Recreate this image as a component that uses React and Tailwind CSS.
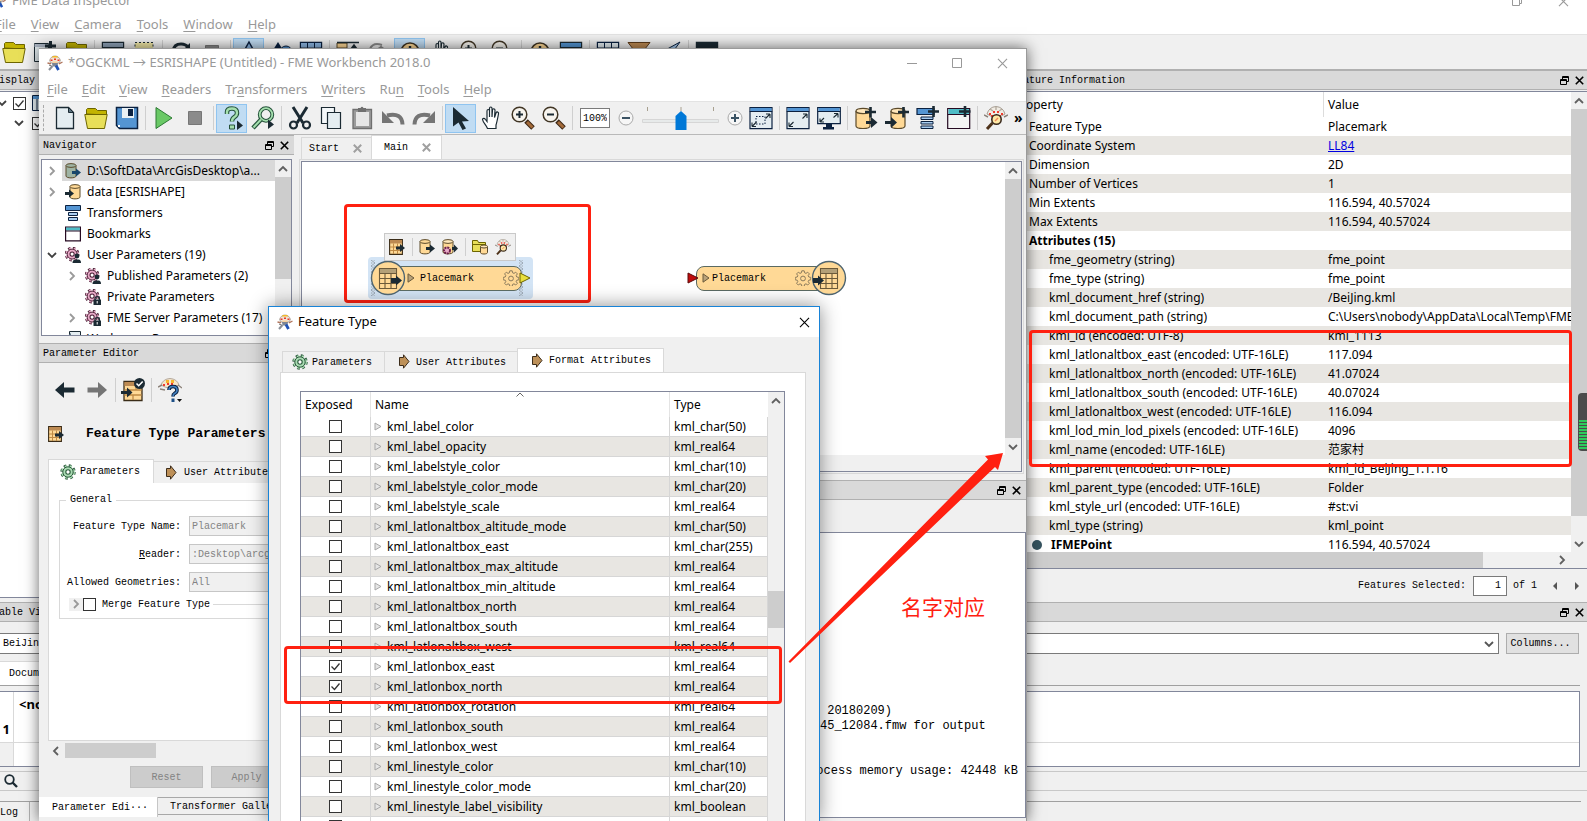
import React from 'react';

const UI = "[font-family:'Noto_Sans','Noto_Sans_CJK_SC',sans-serif]";
const MONO = "[font-family:'Liberation_Mono','Noto_Sans_CJK_SC',monospace]";

const exposedRows = [
  { name: 'kml_label_color', type: 'kml_char(50)' },
  { name: 'kml_label_opacity', type: 'kml_real64' },
  { name: 'kml_labelstyle_color', type: 'kml_char(10)' },
  { name: 'kml_labelstyle_color_mode', type: 'kml_char(20)' },
  { name: 'kml_labelstyle_scale', type: 'kml_real64' },
  { name: 'kml_latlonaltbox_altitude_mode', type: 'kml_char(50)' },
  { name: 'kml_latlonaltbox_east', type: 'kml_char(255)' },
  { name: 'kml_latlonaltbox_max_altitude', type: 'kml_real64' },
  { name: 'kml_latlonaltbox_min_altitude', type: 'kml_real64' },
  { name: 'kml_latlonaltbox_north', type: 'kml_real64' },
  { name: 'kml_latlonaltbox_south', type: 'kml_real64' },
  { name: 'kml_latlonaltbox_west', type: 'kml_real64' },
  { name: 'kml_latlonbox_east', type: 'kml_real64', checked: true },
  { name: 'kml_latlonbox_north', type: 'kml_real64', checked: true },
  { name: 'kml_latlonbox_rotation', type: 'kml_real64' },
  { name: 'kml_latlonbox_south', type: 'kml_real64' },
  { name: 'kml_latlonbox_west', type: 'kml_real64' },
  { name: 'kml_linestyle_color', type: 'kml_char(10)' },
  { name: 'kml_linestyle_color_mode', type: 'kml_char(20)' },
  { name: 'kml_linestyle_label_visibility', type: 'kml_boolean' },
  { name: 'kml_linestyle_outer_color', type: 'kml_char(10)' },
];

const featureRows = [
  { name: 'Feature Type', value: 'Placemark' },
  { name: 'Coordinate System', value: 'LL84', link: true },
  { name: 'Dimension', value: '2D' },
  { name: 'Number of Vertices', value: '1' },
  { name: 'Min Extents', value: '116.594, 40.57024' },
  { name: 'Max Extents', value: '116.594, 40.57024' },
  { name: 'Attributes (15)', value: '', bold: true },
  { name: 'fme_geometry (string)', value: 'fme_point', child: true },
  { name: 'fme_type (string)', value: 'fme_point', child: true },
  { name: 'kml_document_href (string)', value: '/BeiJing.kml', child: true },
  { name: 'kml_document_path (string)', value: 'C:\\Users\\nobody\\AppData\\Local\\Temp\\FME_1', child: true },
  { name: 'kml_id (encoded: UTF-8)', value: 'kml_1113', child: true },
  { name: 'kml_latlonaltbox_east (encoded: UTF-16LE)', value: '117.094', child: true },
  { name: 'kml_latlonaltbox_north (encoded: UTF-16LE)', value: '41.07024', child: true },
  { name: 'kml_latlonaltbox_south (encoded: UTF-16LE)', value: '40.07024', child: true },
  { name: 'kml_latlonaltbox_west (encoded: UTF-16LE)', value: '116.094', child: true },
  { name: 'kml_lod_min_lod_pixels (encoded: UTF-16LE)', value: '4096', child: true },
  { name: 'kml_name (encoded: UTF-16LE)', value: '范家村', child: true },
  { name: 'kml_parent (encoded: UTF-16LE)', value: 'kml_id_BeiJing_1.1.16', child: true },
  { name: 'kml_parent_type (encoded: UTF-16LE)', value: 'Folder', child: true },
  { name: 'kml_style_url (encoded: UTF-16LE)', value: '#st:vi', child: true },
  { name: 'kml_type (string)', value: 'kml_point', child: true },
  { name: 'IFMEPoint', value: '116.594, 40.57024', bold: true, point: true },
];

/* ---------- icons ---------- */

const Svg = ({ size = 24, box = 24, children }) => (
  <svg width={size} height={size} viewBox={`0 0 ${box} ${box}`} fill="none" className="block shrink-0">
    {children}
  </svg>
);

const INK = '#1b2a33';

const Mascot = ({ size = 16 }) => (
  <Svg size={size} box={16}>
    <path d="M2.500 5.500Q4 1 8 1t5.500 4.500L12 8H4z" fill="#efe3d6" stroke="#a39a90" strokeWidth=".8" />
    <path d="M4.500 2.500h7L10 1H6z" fill="#f2b92c" />
    <path d="M3.500 4.500h2v1.500h-2zM7 3.500h2V5H7zM10.500 4.500h2v1.500h-2z" fill="#e8382a" />
    <path d="M5.500 6.500h5V8h-5z" fill="#f8cf9a" />
    <path d="M.5 8l3.500.8M12 8.800l3.500-1.800" stroke="#b0765e" strokeWidth="1.400" />
    <path d="M5 8h6l-.5 3.500h-5z" fill="#7c8594" />
    <path d="M5.500 11l-3.500 4" stroke="#8a8f98" strokeWidth="2" />
    <path d="M9 10.500l2.500 4.500" stroke="#1f51b5" strokeWidth="2.800" />
    <path d="M2 10l2.500 1" stroke="#6b6b6b" />
  </Svg>
);

const NewIcon = () => (
  <Svg>
    <path d="M3.500 1.500h12l5 5v16h-17z" fill="#e4edf1" stroke={INK} strokeWidth="1.300" />
    <path d="M15.500 1.500v5h5z" fill="#5c7380" stroke={INK} />
  </Svg>
);
const FolderIcon = () => (
  <Svg>
    <path d="M2.500 8V3.500l1-1h8l2 2h9V9z" fill="#c3b400" stroke="#6d6500" />
    <path d="M.8 8.500h22.400l-2.700 14H3.500z" fill="#e8df58" stroke="#6d6500" />
  </Svg>
);
const SaveIcon = () => (
  <Svg>
    <path d="M1.500 1.500h21v21h-18l-3-3z" fill="#5495d3" stroke="#0b2140" strokeWidth="1.500" />
    <path d="M7 2h12v10H7z" fill="#e9f0f4" />
    <path d="M13 3h5v7h-5z" fill="#0b2140" />
    <path d="M3 19h2v2H3z" fill="#fff" />
  </Svg>
);
const PlayIcon = () => (
  <Svg>
    <path d="M4 1.500 20 12 4 22.500z" fill="#6ac966" stroke="#2c7a34" />
  </Svg>
);
const StopIcon = () => (
  <Svg>
    <path d="M5.500 5.500h13v13h-13z" fill="#8b8b8b" stroke="#777" />
  </Svg>
);
const HelpIcon = () => (
  <Svg>
    <path d="M7 8V6q0-3.500 5-3.500T17 7q0 2.500-2.500 4T12 15.500" stroke="#24523a" strokeWidth="4.500" />
    <path d="M7 8V6q0-3.500 5-3.500T17 7q0 2.500-2.500 4T12 15.500" stroke="#a5dfae" strokeWidth="2.400" />
    <path d="M9.500 19h5v4h-5z" fill="#a5dfae" stroke="#24523a" />
    <path d="M17 14.500l6 5-6 4.500z" fill={INK} />
  </Svg>
);
const FindRunIcon = () => (
  <Svg>
    <circle cx="15" cy="8.500" r="6.300" stroke="#24523a" strokeWidth="3.800" />
    <circle cx="15" cy="8.500" r="6.300" stroke="#a5dfae" strokeWidth="1.800" />
    <path d="M10 13.500 2 22" stroke="#24523a" strokeWidth="4.500" />
    <path d="M10 13.500 2.500 21.500" stroke="#a5dfae" strokeWidth="2" />
    <path d="M17 13.500l6 5-6 4.500z" fill={INK} />
  </Svg>
);
const CutIcon = () => (
  <Svg>
    <path d="M5 1l10 16M19 1 9 17" stroke={INK} strokeWidth="3" />
    <circle cx="5.500" cy="19" r="3.500" stroke={INK} strokeWidth="2.200" />
    <circle cx="18.500" cy="19" r="3.500" stroke={INK} strokeWidth="2.200" />
  </Svg>
);
const CopyIcon = () => (
  <Svg>
    <path d="M2.500 1.500h13v16h-13z" fill="#f4f8fa" stroke={INK} strokeWidth="1.200" />
    <path d="M8.500 6.500h13v16h-13z" fill="#e4edf1" stroke={INK} strokeWidth="1.200" />
  </Svg>
);
const PasteIcon = () => (
  <Svg>
    <path d="M3 3.500h18.500v19H3z" fill="#9b9b9b" stroke="#6f6f6f" strokeWidth="1.300" />
    <path d="M6 6h13v14H6z" fill="#e6e6e6" />
    <path d="M8 2h2.500q1.500-2.500 3 0H16v4H8z" fill="#6f6f6f" />
  </Svg>
);
const UndoIcon = () => (
  <Svg>
    <path d="M6 9.500Q21 6 21.500 18.500" stroke="#757575" strokeWidth="4" />
    <path d="M1 5v12h12z" fill="#757575" />
  </Svg>
);
const RedoIcon = () => (
  <Svg>
    <path d="M18 9.500Q3 6 2.500 18.500" stroke="#757575" strokeWidth="4" />
    <path d="M23 5v12H11z" fill="#757575" />
  </Svg>
);
const PointerIcon = () => (
  <Svg>
    <path d="M4 1l16 14-7 .5 4 7-3.500 1.500-4-7.500L4 20.500z" fill={INK} />
  </Svg>
);
const HandIcon = () => (
  <Svg>
    <path
      d="M7.500 22.500c-1-3-4.500-6-5-9 0-1.500 2-1.500 3 0l1.500 2V5c0-2 2.500-2 2.500 0v6-8.500c0-2 2.500-2 2.500 0V11l.5-7c.3-1.800 2.700-1.600 2.500.5l-.5 7 1.500-4.500c.8-1.800 3-1 2.500 1-.8 4-1.500 8-2.500 11v3.500z"
      fill="#fff"
      stroke={INK}
      strokeWidth="1.200"
    />
  </Svg>
);
const ZoomIcon = ({ plus }) => (
  <Svg>
    <path d="M15 15l7 7" stroke="#3a2412" strokeWidth="5" />
    <path d="M16 16l5.500 5.500" stroke="#a36a3a" strokeWidth="3" />
    <circle cx="8.500" cy="8.500" r="7.300" fill="#f7f4ee" stroke="#403524" strokeWidth="1.500" />
    <path d={plus ? 'M8.500 5v7M5 8.500h7' : 'M5 8.500h7'} stroke={INK} strokeWidth="2" />
  </Svg>
);
const WindowArrows = ({ monitor, dashed }) => (
  <Svg>
    <path d={monitor ? 'M.7 1.700h22.600v16H.7z' : 'M1 1.700h22v21H1z'} fill="#e4edf1" stroke="#0b2140" strokeWidth="1.200" />
    <path d="M1.500 2h21v3h-21z" fill="#5495d3" />
    <path d="M.7 5.500h22.600" stroke="#0b2140" />
    {dashed && <path d="M7 10.500h9v7.500H7z" stroke="#0b2140" strokeDasharray="1.500 1.500" />}
    <path
      d={monitor
        ? 'M21 7.500h-4M21 7.500v4M21 7.500l-4.500 4M3 16v-3.500M3 16h4M3 16l4-4'
        : 'M21 8h-4M21 8v4M21 8l-4.500 4.500M3 20.500v-4M3 20.500h4M3 20.500 7.500 16'}
      stroke={INK}
      strokeWidth="1.100"
    />
    {monitor && <path d="M9 18h6v3h2v2.500H6V21h3z" fill="#0b2140" />}
  </Svg>
);
const Drum = () => (
  <>
    <path d="M2 5v15c0 3.300 14 3.300 14 0V5" fill="#ffd996" stroke="#5b4a2a" strokeWidth="1.200" />
    <ellipse cx="9" cy="5" rx="7" ry="2.600" fill="#ffe7bb" stroke="#5b4a2a" strokeWidth="1.200" />
  </>
);
const ReaderAdd = () => (
  <Svg>
    <Drum />
    <path d="M12 15h5v-4l6.500 5.500L17 22v-4h-5z" fill={INK} />
    <path d="M11 6h11M16.500 1v10.500" stroke={INK} strokeWidth="2.600" />
  </Svg>
);
const WriterAdd = () => (
  <Svg>
    <g transform="translate(4 0)">
      <Drum />
    </g>
    <path d="M0 15h6v-4l6 5.500L6 22v-4H0z" fill={INK} />
    <path d="M13 6h11M18.500 1v10.500" stroke={INK} strokeWidth="2.600" />
  </Svg>
);
const TransformerAdd = () => (
  <Svg>
    <path d="M1 2.500h17v6H1z" fill="#5495d3" stroke="#0b2140" strokeWidth="1.200" />
    <path d="M5 11h12v2.500H5zM5 15.500h12V18H5zM5 20h12v2.500H5z" fill="#a9cdf0" stroke="#0b2140" />
    <path d="M12 5.500h11M17.500 0v11" stroke={INK} strokeWidth="2.600" />
  </Svg>
);
const BookmarkAdd = () => (
  <Svg>
    <path d="M.7 2.500h22v20h-22z" fill="#f4f4f4" stroke="#260a22" strokeWidth="1.200" />
    <path d="M1.500 3h20.500v5H1.500z" fill="#4fbcc6" />
    <path d="M.7 8.500h22" stroke="#260a22" />
    <path d="M12 5.500h11.500M18 0v11" stroke={INK} strokeWidth="2.600" />
  </Svg>
);
const InspectorIcon = ({ size = 24 }) => (
  <Svg size={size}>
    <path d="M3 8q2-7 9-7.500Q19 1 21 8l-9 5z" fill="#f1ece4" stroke="#a69d92" />
    <path d="M6 3l3 2M18 3l-3 2M12 1v3" stroke="#b5aca0" strokeWidth="1.400" />
    <path d="M5 7h2v2H5zM9 5h2v2H9zM13 5h2v2h-2zM17 7h2v2h-2zM7 9h2v2H7zM15 9h2v2h-2z" fill="#f03c2e" />
    <path d="M0 9l4 2M24 9l-4 2" stroke="#8b8178" strokeWidth="1.400" />
    <path d="M8.500 17 3 23" stroke="#4d3118" strokeWidth="3" />
    <circle cx="12.500" cy="13.500" r="4.700" fill="#ffe9a6" stroke="#3a2a1c" strokeWidth="1.600" />
    <path d="M11 15l3-3" stroke="#f08a5a" strokeWidth="1.400" />
  </Svg>
);
const MascotHelp = () => (
  <Svg>
    <path d="M3 7q2-6 9-6.500Q19 1 21 7q-9 6-18 0z" fill="#f6e5c8" stroke="#b3a79a" />
    <path d="M8 2h3v3H8zM13 2h3v3h-3z" fill="#f6b52c" />
    <path d="M5 6h2v2H5zM9 5h2v2H9zM13 5h2v2h-2zM16 7h2v2h-2z" fill="#ee3b2f" />
    <path d="M0 9l4-2M20 7l4 3M2 11l5 1" stroke="#8b8178" strokeWidth="1.400" />
    <path d="M11 12q0-3.500 4-3.500t4 3.500q0 2.500-2.500 3.500-1.500.8-1.500 3" stroke="#0b2140" strokeWidth="3.600" />
    <path d="M11 12q0-3.500 4-3.500t4 3.500q0 2.500-2.500 3.500-1.500.8-1.500 3" stroke="#3f7fc0" strokeWidth="1.600" />
    <path d="M13.500 20.500h3V24h-3z" fill="#1d4f86" />
    <path d="M19 21h5l-2.500 3z" fill="#111" />
  </Svg>
);

const FeatureTable = () => (
  <Svg size={16} box={16}>
    <path d="M.6.600h12.800v14.800H.6z" fill="#ffd996" stroke="#3a2c18" strokeWidth="1.100" />
    <path d="M1 1h12v3.500H1z" fill="#bd8a52" />
    <path d="M1 8h12M1 11.500h12M4.500 4.500V15M8.500 4.500V15" stroke="#c08b45" />
    <path d="M7 7.500h4V5l5 4-5 4v-2.500H7z" fill={INK} />
  </Svg>
);
const FeatureTableCheck = () => (
  <Svg>
    <path d="M3 3.500h18v19H3z" fill="#ffd996" stroke="#3a2c18" strokeWidth="1.300" />
    <path d="M3.500 4h17v4h-17z" fill="#bd8a52" />
    <path d="M3.500 12h17M3.500 17h17M9 12v5M15 8v4M12 17v5" stroke="#c08b45" strokeWidth="1.300" />
    <path d="M0 13h6v-3.500l5.500 5-5.500 5V16H0z" fill={INK} />
    <circle cx="18.500" cy="5.500" r="5.500" fill={INK} />
    <path d="M15.500 5.500l2.200 2.200 4-4.200" stroke="#fff" strokeWidth="1.600" />
  </Svg>
);
const DrumArrow = ({ color = '#ffd996', ink = INK, left }) => (
  <Svg size={16} box={16}>
    <g transform={left ? 'translate(4 0)' : undefined}>
      <path d="M1 2.500v10.500c0 2.500 10 2.500 10 0V2.500" fill={color} stroke="#5b4a2a" />
      <ellipse cx="6" cy="2.500" rx="5" ry="1.900" fill={color} stroke="#5b4a2a" />
    </g>
    <path d={left ? 'M0 8h4V5.500l5 4-5 4V11H0z' : 'M7 8h4V5.500l5 4-5 4V11H7z'} fill={ink} />
  </Svg>
);
const TransformersIcon = () => (
  <Svg size={16} box={16}>
    <path d="M.5.500h15v5H.5z" fill="#5495d3" stroke="#0b2140" />
    <path d="M3.500 7.500h9v3h-9zM3.500 12.500h9v3h-9z" fill="#a9cdf0" stroke="#0b2140" />
  </Svg>
);
const BookmarksIcon = () => (
  <Svg size={16} box={16}>
    <path d="M.6 1.100h14.800v13.800H.6z" fill="#fff" stroke="#260a22" strokeWidth="1.200" />
    <path d="M1 1.500h14v3H1z" fill="#4fbcc6" />
    <path d="M.6 5h14.800" stroke="#260a22" />
  </Svg>
);
const GearShape = ({ fill, stroke, hole = '#fff' }) => (
  <>
    <circle cx="8" cy="8" r="6.300" stroke={stroke} strokeWidth="2.800" strokeDasharray="2.500 2.450" />
    <circle cx="8" cy="8" r="6.100" stroke={fill} strokeWidth="1.600" strokeDasharray="2.500 2.450" />
    <circle cx="8" cy="8" r="5.200" fill={fill} stroke={stroke} />
    <circle cx="8" cy="8" r="2.200" fill={hole} stroke={stroke} strokeWidth="1.100" />
  </>
);
const GearGreen = () => (
  <Svg size={16} box={16}>
    <GearShape fill="#a9dbb2" stroke="#2b5a3c" />
  </Svg>
);
const GearPlain = () => (
  <Svg size={16} box={16}>
    <path
      d="M6.800.8h2.400l.4 2 1.400.6 1.700-1.200 1.700 1.700-1.200 1.700.6 1.400 2 .4v2.400l-2 .4-.6 1.400 1.200 1.700-1.700 1.700-1.700-1.200-1.400.6-.4 2H6.800l-.4-2-1.400-.6-1.700 1.200-1.700-1.700 1.200-1.700-.6-1.400-2-.4V7.400l2-.4.6-1.400-1.200-1.700 1.700-1.700 1.700 1.200 1.400-.6z"
      fill="#ffd996"
      stroke="#8a7a5c"
      strokeLinejoin="round"
    />
    <circle cx="8" cy="8.500" r="2.400" stroke="#8a7a5c" />
  </Svg>
);
const GearPink = ({ lock }) => (
  <Svg size={16} box={16}>
    <g transform="translate(-.5 -.5) scale(.95)">
      <GearShape fill="#e9aac8" stroke="#4b2036" />
    </g>
    {lock ? (
      <>
        <path d="M8.500 10.500H16V16H8.500z" fill={INK} />
        <path d="M10 11V9.200c0-2 4.400-2 4.400 0V11" stroke={INK} strokeWidth="1.300" />
        <path d="M11.700 12h1v2.500h-1z" fill="#fff" />
      </>
    ) : (
      <>
        <circle cx="12" cy="9" r="2.400" fill={INK} />
        <path d="M7.500 16q0-3.500 3-3.500h3q2.500 0 2.500 3.500z" fill={INK} />
      </>
    )}
  </Svg>
);
const DrumGear = () => (
  <Svg size={16} box={16}>
    <path d="M1 2.500V13c0 2.500 10 2.500 10 0V2.500" fill="#ffd996" stroke="#5b4a2a" />
    <ellipse cx="6" cy="2.500" rx="5" ry="1.900" fill="#ffe7bb" stroke="#5b4a2a" />
    <path d="M10 8h2V5.500l4 4-4 4V11h-2z" fill={INK} />
    <circle cx="5" cy="11.500" r="3" fill="#e9aac8" stroke="#6a1f4c" strokeWidth="2" strokeDasharray="2 .8" />
  </Svg>
);
const FolderDrum = () => (
  <Svg size={16} box={16}>
    <path d="M.5 12.500v-11h5l1 2h7v9z" fill="#e8df58" stroke="#6d6500" />
    <path d="M1 5.500h12" stroke="#6d6500" />
    <path d="M8.500 7.500v6c0 2 7 2 7 0v-6" fill="#ffd996" stroke="#5b4a2a" />
    <ellipse cx="12" cy="7.500" rx="3.500" ry="1.500" fill="#ffe7bb" stroke="#5b4a2a" />
  </Svg>
);
const BrownArrow = () => (
  <Svg size={16} box={16}>
    <path d="M3.500 3.500h4V.8L13 7.500 7.500 14.200V11.500h-4z" fill="#bd9058" stroke="#3c2c1a" />
  </Svg>
);
const BigArrow = ({ flip, color }) => (
  <Svg size={20} box={20}>
    <g transform={flip ? 'translate(20 0) scale(-1 1)' : undefined}>
      <path d="M0 10 9 2v5.500h10.500v5H9V18z" fill={color} />
    </g>
  </Svg>
);
const Chevron = ({ dir = 'right', color = '#9a9a9a' }) => {
  const d = {
    right: 'M3 1l4 4-4 4',
    left: 'M7 1 3 5l4 4',
    up: 'M1 7l4-4 4 4',
    down: 'M1 3l4 4 4-4',
  }[dir];
  return (
    <Svg size={10} box={10}>
      <path d={d} stroke={color} strokeWidth="1.800" />
    </Svg>
  );
};
const FloatIcon = () => (
  <Svg size={9} box={9}>
    <path d="M2.500 3V.5h6v5h-2M2.500 1.500h6" stroke="#000" />
    <path d="M.5 3.500h6v5h-6zM.5 4.500h6" stroke="#000" />
  </Svg>
);
const CloseIcon = ({ size = 9, color = '#000', width = 1.6 }) => (
  <Svg size={size} box={9}>
    <path d="M.8.800l7.400 7.400M8.200.800.8 8.200" stroke={color} strokeWidth={width} />
  </Svg>
);

/* ---------- shared parts ---------- */

const Check = ({ label, checked, id }) => (
  <span className="inline-grid h-[13px] w-[13px] align-middle">
    <input
      id={id}
      type="checkbox"
      aria-label={label}
      defaultChecked={checked}
      className="col-start-1 row-start-1 m-0 h-[13px] w-[13px] appearance-none border border-[#333] bg-white"
    />
    {checked && (
      <svg viewBox="0 0 13 13" className="pointer-events-none col-start-1 row-start-1 h-[13px] w-[13px]" fill="none">
        <path d="M2.500 6.500l3 3 5-6" stroke="#333" strokeWidth="1.300" />
      </svg>
    )}
  </span>
);

const PanelHeader = ({ title, inset }) => (
  <div className={`flex h-5 shrink-0 items-center justify-between border-y border-[#b0b0b0] bg-[#d9d9d9] pl-[4px] ${inset ? 'pr-[5px]' : 'pr-[3px]'}`}>
    <span className={`${MONO} whitespace-pre pt-px text-[10px] text-black`}>{title}</span>
    <span className="flex gap-[6px]">
      <button aria-label="Float"><FloatIcon /></button>
      <button aria-label="Close"><CloseIcon /></button>
    </span>
  </div>
);

const Menu = ({ items }) =>
  items.map(([before, key, after]) => (
    <button key={before + key + after} className="text-[13px] text-[#999]">
      {before}<span className="underline underline-offset-2">{key}</span>{after}
    </button>
  ));

const Tool = ({ label, active, children }) => (
  <button
    aria-label={label}
    className={`flex h-[29px] w-[31px] shrink-0 items-center justify-center ${active ? 'border border-[#8fc4f0] bg-[#c0dcf3]' : ''}`}
  >
    {children}
  </button>
);

const Sep = () => (
  <span className="flex h-6 w-[6px] shrink-0 justify-center">
    <span className="w-px bg-[#cfcfcf]" />
  </span>
);

const VScroll = ({ before, thumb, arrowDown = true, after }) => (
  <div className="flex w-4 shrink-0 flex-col items-center bg-[#f0f0f0]">
    <span className="flex h-[17px] items-center"><Chevron dir="up" color="#606060" /></span>
    {before && <span className={before} />}
    <span className={`w-full bg-[#cdcdcd] ${thumb}`} />
    {after && <span className={after} />}
    {arrowDown && <span className="flex h-[17px] items-center"><Chevron dir="down" color="#606060" /></span>}
  </div>
);

/* ---------- FME Data Inspector ---------- */

const FeatureInformation = () => (
  <section className="flex min-w-0 flex-1 flex-col border-t border-[#b0b0b0]">
    <PanelHeader title="Feature Information" />
    <div className="mt-px flex min-h-0 flex-1 flex-col border-y border-[#82879b] bg-white">
      <div className="flex min-h-0 flex-1">
        <div className="min-w-0 flex-1 overflow-hidden">
          <table className="w-full table-fixed border-separate border-spacing-0 text-[12px]">
            <colgroup>
              <col className="w-[317px]" />
              <col />
            </colgroup>
            <thead>
              <tr className="h-[25px] text-left">
                <th className="border-r border-[#dcdcdc] p-0 pl-[7px] font-normal">Property</th>
                <th className="p-0 pl-[4px] font-normal">Value</th>
              </tr>
            </thead>
            <tbody>
              {featureRows.map((row, i) => (
                <tr key={row.name} className={`h-[19px] ${i % 2 ? 'bg-[#e8e6e2]' : 'bg-white'}`}>
                  <td className={`overflow-hidden whitespace-nowrap p-0 leading-[19px] ${row.bold ? 'font-bold' : ''} ${row.child ? 'pl-[42px]' : 'pl-[22px]'}`}>
                    {row.point ? (
                      <span className="flex items-center gap-[9px] pl-[3px]">
                        <span className="h-[10px] w-[10px] rounded-full bg-[#35535f]" />
                        {row.name}
                      </span>
                    ) : (
                      row.name
                    )}
                  </td>
                  <td className="overflow-hidden whitespace-nowrap p-0 pl-[4px] leading-[19px]">
                    {row.link ? <a href="#ll84" className="text-[#0000e0] underline">{row.value}</a> : row.value}
                  </td>
                </tr>
              ))}
            </tbody>
          </table>
        </div>
        <VScroll thumb="flex-1" after="h-[19px]" />
      </div>
      <div className="flex h-4 shrink-0 items-center bg-[#f0f0f0]">
        <span className="h-full w-[82%] bg-[#cdcdcd]" />
        <span className="flex-1" />
        <span className="pr-[20px]"><Chevron color="#606060" /></span>
      </div>
    </div>
    <div className={`${MONO} flex h-[33px] shrink-0 items-center justify-end pr-[6px] text-[10px]`}>
      <label htmlFor="selected">Features Selected:</label>
      <input id="selected" defaultValue="1" className="ml-[7px] h-5 w-[34px] border border-[#7a7a7a] bg-white pr-[5px] text-right" />
      <span className="ml-[6px]">of 1</span>
      <button aria-label="Previous" className="ml-[14px]">
        <Svg size={8} box={8}><path d="M6 0v8L2 4z" fill="#555" /></Svg>
      </button>
      <button aria-label="Next" className="ml-[14px]">
        <Svg size={8} box={8}><path d="M2 0v8l4-4z" fill="#555" /></Svg>
      </button>
    </div>
  </section>
);

const TableView = () => (
  <section className="flex h-[219px] shrink-0 flex-col">
    <PanelHeader title="Table View" />
    <div className={`${MONO} mt-[11px] flex h-[21px] shrink-0 gap-[7px] pr-2 text-[10px]`}>
      <div className="flex min-w-0 flex-1 items-center justify-between border border-[#7a7a7a] bg-white pl-[13px] pr-[4px]">
        <span>BeiJing [OGCKML]</span>
        <Chevron dir="down" color="#555" />
      </div>
      <button className="w-[73px] border border-[#adadad] bg-[#e1e1e1] pr-1">Columns...</button>
    </div>
    <div className="mr-[7px] mt-[7px] flex h-[25px] shrink-0 items-end border-b border-[#a0a0a0]">
      <button className={`${MONO} h-6 border-t border-[#d9d9d9] bg-white px-[20px] text-[10px]`}>Document</button>
    </div>
    <div className="mr-[7px] mt-[5px] flex h-[76px] shrink-0 border border-[#82879b] bg-white text-[13px] font-bold">
      <div className="flex w-[24px] flex-col border-r border-[#d9d9d9]">
        <span className="mt-[25px] flex h-[26px] items-center justify-end border-b border-[#d9d9d9] pr-[3px]">1</span>
        <span className="flex-1 bg-[#f0f0f0]" />
      </div>
      <div className="h-[51px] flex-1 border-b border-[#d9d9d9] pl-[5px] pt-[3px]">&lt;not selected&gt;</div>
    </div>
    <div className="mt-[4px] flex h-[20px] shrink-0 items-center border-y border-[#c8c8c8] pl-[15px]">
      <Svg size={14} box={14}>
        <circle cx="5.500" cy="5.500" r="4.300" stroke={INK} strokeWidth="1.800" />
        <path d="M8.500 8.500 13 13" stroke={INK} strokeWidth="2.400" />
      </Svg>
    </div>
    <div className="mr-[6px] mt-[10px] flex flex-1 border-t border-[#a0a0a0]">
      <button className={`${MONO} h-5 w-[41px] border-r border-[#b0b0b0] text-[10px]`}>Log</button>
    </div>
  </section>
);

const InfoDot = () => (
  <Svg>
    <circle cx="12" cy="12" r="9" fill="#ffd996" stroke="#403524" strokeWidth="1.600" />
    <path d="M12 6v2M12 10v7" stroke={INK} strokeWidth="2.400" />
  </Svg>
);
const GridIcon = ({ header = '#8db8e4' }) => (
  <Svg>
    <path d="M1.500 2.500h21v19h-21z" fill="#e4edf1" stroke="#0b2140" strokeWidth="1.400" />
    <path d="M2 3h20v4.500H2z" fill={header} />
    <path d="M2 8h20M8.500 3v18M15.500 3v18" stroke="#0b2140" />
  </Svg>
);
const WinIcon = ({ header = '#8fa3b8' }) => (
  <Svg>
    <path d="M1.500 2.500h21v19h-21z" fill="#e4edf1" stroke={INK} strokeWidth="1.400" />
    <path d="M2 3h20v4H2z" fill={header} />
    <path d="M1.500 7.500h21" stroke={INK} />
  </Svg>
);

const InspectorWindow = () => (
  <div className="absolute -left-[11px] -top-[13px] bottom-0 right-0 flex flex-col bg-[#f0f0f0]">
    <div className="flex h-7 shrink-0 items-center justify-between bg-white pr-[18px] text-[13px] text-[#999]">
      <span className="flex items-center gap-[6px] pl-[3px]"><Mascot size={14} />FME Data Inspector</span>
      <span className="flex items-center gap-[36px]">
        <Svg size={10} box={10}><path d="M.5 2.500h7v7h-7zM2.500 2.500v-2h7v7h-2" stroke="#999" /></Svg>
        <CloseIcon size={11} color="#999" width={0.9} />
      </span>
    </div>
    <nav className="flex h-[19px] shrink-0 items-center gap-[15px] bg-white pl-[6px]">
      <Menu items={[['', 'F', 'ile'], ['', 'V', 'iew'], ['', 'C', 'amera'], ['', 'T', 'ools'], ['', 'W', 'indow'], ['', 'H', 'elp']]} />
    </nav>
    <div className="flex h-[35px] shrink-0 items-center border-t border-[#e3e3e3] pl-[9px]">
      <Tool label="Open"><FolderIcon /></Tool>
      <Tool label="Add dataset">
        <Svg><path d="M1.500 3.500h14v18h-14z" fill="#e4edf1" stroke={INK} /><path d="M1.500 4h14v3h-14z" fill="#aeb8c6" /><path d="M12 6h11M17.500 1v11" stroke={INK} strokeWidth="3" /></Svg>
      </Tool>
      <Tool label="Open recent"><FolderIcon /></Tool>
      <Sep />
      <Tool label="New view"><WinIcon /></Tool>
      <Tool label="Select area">
        <Svg><path d="M3 2.500h18v18H3z" fill="#efe6a4" stroke={INK} strokeDasharray="2 2" /></Svg>
      </Tool>
      <Sep />
      <Tool label="Refresh">
        <Svg><path d="M4 11q1-7 8-7 5 0 8 4" stroke={INK} strokeWidth="3" /><path d="M21 3v8h-8z" fill={INK} /></Svg>
      </Tool>
      <Tool label="Stop"><StopIcon /></Tool>
      <Sep />
      <Tool label="2D" active>
        <Svg><path d="M12 2 22 20H2z" fill="#8db8e4" stroke="#0b2140" strokeWidth="1.500" /></Svg>
      </Tool>
      <Tool label="3D">
        <Svg><path d="M10 2 20 18H0z" fill="#0b2140" /><circle cx="18" cy="12" r="6" fill="#5495d3" stroke="#0b2140" /></Svg>
      </Tool>
      <Tool label="Table"><GridIcon /></Tool>
      <Sep />
      <Tool label="Layers">
        <Svg><path d="M1 3h10v5H1z" fill="#ffd996" stroke="#5b4a2a" /><path d="M1 2.500h22M15 9l3-4 3 4z" stroke={INK} strokeWidth="1.500" fill={INK} /></Svg>
      </Tool>
      <Tool label="Rotate">
        <Svg><path d="M3 9q3-7 12-4M7 12l7-5 8 6" stroke="#8b8b8b" strokeWidth="2" /></Svg>
      </Tool>
      <Tool label="Information" active><InfoDot /></Tool>
      <Tool label="Pan"><HandIcon /></Tool>
      <Tool label="Zoom in"><ZoomIcon plus /></Tool>
      <Tool label="Zoom out"><ZoomIcon /></Tool>
      <Sep />
      <Tool label="Identify"><InfoDot /></Tool>
      <Tool label="Zoom extents"><WinIcon header="#5495d3" /></Tool>
      <Sep />
      <Tool label="Mark"><GridIcon header="#e4edf1" /></Tool>
      <Tool label="Filter">
        <Svg><path d="M1 2.500h22L14 14v8h-4v-8z" fill="#bd8a52" stroke="#5b3a1a" /></Svg>
      </Tool>
      <Tool label="Measure">
        <Svg><path d="M22 2 2 13h12z" fill="#a9cdf0" stroke="#0b2140" /></Svg>
      </Tool>
      <Sep />
      <Tool label="Background"><WinIcon header={INK} /></Tool>
    </div>
    <div className="flex min-h-0 flex-1">
      <section className="flex w-[1014px] shrink-0 flex-col border-t border-[#b0b0b0] pb-1">
        <PanelHeader title="Display Control" />
        <div className="mt-px flex-1 border-y border-[#82879b] bg-white pl-[8px] pt-[4px]">
          <div className="flex h-[14px] items-center gap-[6px]">
            <Chevron dir="down" color="#404040" />
            <Check label="Dataset" checked />
            <Svg size={16} box={16}><path d="M.5.500h15v15H.5z" fill="#e4edf1" stroke="#0b2140" /><path d="M1 1h14v3H1z" fill="#5495d3" /><path d="M5 4v11" stroke="#0b2140" /></Svg>
          </div>
          <div className="mt-[6px] flex h-[14px] items-center gap-[8px] pl-[17px]">
            <Chevron dir="down" color="#404040" />
            <Check label="Layer" checked />
          </div>
        </div>
      </section>
      <span className="w-1" />
      <FeatureInformation />
    </div>
    <TableView />
  </div>
);

/* ---------- FME Workbench ---------- */

const TreeRow = ({ icon, label, open, closed, child, selected }) => (
  <li className={`flex h-[21px] items-center ${child ? 'pl-[20px]' : ''}`}>
    <span className="flex w-5 shrink-0 justify-center">
      {closed && <Chevron />}
      {open && <Chevron dir="down" color="#404040" />}
    </span>
    <span className={`flex h-full min-w-0 flex-1 items-center gap-[6px] whitespace-nowrap pl-[3px] ${selected ? 'bg-[#d9d9d9]' : ''}`}>
      {icon}
      {label}
    </span>
  </li>
);

const Field = ({ label, id, value }) => (
  <div className="flex h-7 items-center gap-2">
    <label htmlFor={id} className="w-[121px] shrink-0 text-right">{label}</label>
    <input id={id} disabled defaultValue={value} className="h-5 w-[160px] border border-[#c6c6c6] bg-[#f0f0f0] px-[2px] text-[#838383]" />
  </div>
);

const LeftDock = () => (
  <aside className="flex w-[255px] shrink-0 flex-col overflow-hidden">
    <PanelHeader title="Navigator" inset />
    <div className="mx-[2px] mt-[4px] flex h-[177px] shrink-0 overflow-hidden border border-[#82879b] bg-white text-[12px]">
      <ul className="min-w-0 flex-1">
        <TreeRow closed selected icon={<DrumArrow color="#9fb4a4" ink="#17466b" />} label="D:\SoftData\ArcGisDesktop\a..." />
        <TreeRow closed icon={<DrumArrow left />} label="data [ESRISHAPE]" />
        <TreeRow icon={<TransformersIcon />} label="Transformers" />
        <TreeRow icon={<BookmarksIcon />} label="Bookmarks" />
        <TreeRow open icon={<GearPink />} label="User Parameters (19)" />
        <TreeRow child closed icon={<GearPink />} label="Published Parameters (2)" />
        <TreeRow child icon={<GearPink lock />} label="Private Parameters" />
        <TreeRow child closed icon={<GearPink lock />} label="FME Server Parameters (17)" />
        <TreeRow
          icon={<Svg size={16} box={16}><path d="M4.500.500h11v14h-11z" fill="#e4edf1" stroke={INK} /><path d="M0 7l6-5v11z" fill="#5b7383" /></Svg>}
          label="Workspace Resources"
        />
      </ul>
      <VScroll thumb="h-[102px]" arrowDown={false} />
    </div>
    <div className="h-[7px] shrink-0" />
    <PanelHeader title="Parameter Editor" inset />
    <div className="flex h-[54px] shrink-0 items-center pl-4">
      <button aria-label="Back"><BigArrow color={INK} /></button>
      <button aria-label="Forward" className="ml-3"><BigArrow flip color="#757575" /></button>
      <span className="ml-[5px]"><Sep /></span>
      <button aria-label="Apply type" className="ml-[3px]"><FeatureTableCheck /></button>
      <span className="ml-[3px]"><Sep /></span>
      <button aria-label="Help" className="ml-[4px]"><MascotHelp /></button>
    </div>
    <div className={`${MONO} mt-px flex h-[31px] shrink-0 items-center gap-[22px] whitespace-nowrap pl-[9px] text-[13px] font-bold`}>
      <FeatureTable />
      Feature Type Parameters
    </div>
    <div className={`${MONO} mt-[10px] flex h-[24px] shrink-0 items-end whitespace-nowrap pl-[9px] text-[10px]`}>
      <button className="flex h-6 w-[106px] shrink-0 items-center gap-1 border-x border-t border-[#d9d9d9] bg-white pl-[11px]"><GearGreen />Parameters</button>
      <button className="flex h-[22px] w-[140px] shrink-0 items-center gap-[5px] border-t border-[#d9d9d9] pl-[9px]"><BrownArrow />User Attributes</button>
    </div>
    <div className={`${MONO} ml-[9px] min-h-0 flex-1 border-b border-l border-[#d9d9d9] bg-white pl-[10px] pt-[10px] text-[10px]`}>
      <fieldset className="h-[126px] w-[300px] whitespace-nowrap border border-[#d9d9d9] px-0">
        <legend className="ml-[6px] px-[4px] leading-[14px]">General</legend>
        <div className="pt-[5px]">
          <Field id="type-name" label="Feature Type Name:" value="Placemark" />
          <Field id="reader" label={<><u>R</u>eader:</>} value=":Desktop\arcgis" />
          <Field id="geoms" label="Allowed Geometries:" value="All" />
        </div>
        <div className="flex h-[16px] items-center pl-[9px]">
          <span className="flex h-[13px] w-[14px] items-center justify-center bg-[#f0f0f0]"><Chevron /></span>
          <Check id="merge" label="Merge Feature Type" />
          <label htmlFor="merge" className="ml-[6px] mr-[3px]">Merge Feature Type</label>
          <span className="h-px flex-1 bg-[#d9d9d9]" />
        </div>
      </fieldset>
    </div>
    <div className="ml-[9px] mt-[2px] flex h-[15px] shrink-0 items-center pl-[3px]">
      <Chevron dir="left" color="#606060" />
      <span className="ml-1 h-full w-[91px] bg-[#cdcdcd]" />
    </div>
    <div className={`${MONO} mt-2 flex h-[22px] shrink-0 justify-end gap-[8px] text-[10px] text-[#838383]`}>
      <button disabled className="w-[73px] border border-[#bfbfbf] bg-[#cccccc]">Reset</button>
      <button disabled className="w-[83px] border border-[#bfbfbf] bg-[#cccccc] pr-3">Apply</button>
    </div>
    <div className={`${MONO} mt-[9px] flex h-6 shrink-0 items-start whitespace-nowrap text-[10px]`}>
      <button className="h-5 w-[119px] shrink-0 border-r border-[#c6c6c6] bg-white pl-1 pt-px">Parameter Edi···</button>
      <button className="h-[18px] w-[136px] shrink-0 border-y border-[#a8a8a8] pl-3 text-left">Transformer Gallery</button>
    </div>
  </aside>
);

const NodeCircle = ({ arrowAt }) => (
  <svg width="36" height="36" viewBox="0 0 36 36" fill="none">
    <circle cx="18" cy="18" r="16.500" fill="#ffd996" stroke="#4f6570" strokeWidth="1.400" />
    <path d="M9.500 8.500h17v20h-17z" stroke="#6b5a3a" strokeWidth="1.100" />
    <path d="M10 9h16v4H10z" fill="#b3a078" />
    <path d="M9.500 13.500h17M9.500 18.500h17M9.500 23.500h17M15 13v15M21 13v15" stroke="#6b5a3a" strokeWidth="1.100" />
    <path d={arrowAt === 'left' ? 'M2 18h5v-2.500l6 5-6 5V23H2z' : 'M21 18h5v-2.500l6 5-6 5V23h-5z'} fill={INK} />
  </svg>
);

const NodeTriangle = () => (
  <svg width="8" height="10" viewBox="0 0 8 10"><path d="M1 .8v8.400L7 5z" fill="#b9a27a" stroke="#6b5a3a" /></svg>
);

/* zigzag grip on the edges of a selected node */
const Grip = () => (
  <svg width="4" height="36" viewBox="0 0 4 36" fill="none" className="absolute top-[3px]">
    <path d="M0 0l4 3-4 3 4 3-4 3 4 3-4 3 4 3-4 3 4 3-4 3 4 3-4 3" stroke="#9aa6b2" />
    <path d="M4 0 0 3l4 3-4 3 4 3-4 3 4 3-4 3 4 3-4 3 4 3-4 3 4 3" stroke="#b6c2ce" />
  </svg>
);

const Canvas = () => (
  <div className="relative min-w-0 flex-1 overflow-hidden bg-white">
    <div className="absolute left-[66px] top-[95px] flex h-[42px] w-[165px] items-center rounded bg-[#d3e4f5]">
      <span className="absolute left-[3px] top-0"><Grip /></span>
      <span className="absolute left-[151px] top-0"><Grip /></span>
      <div className="z-10 ml-[2px]"><NodeCircle /></div>
      <div className="z-[1] -ml-[18px] flex h-[25px] w-[134px] items-center rounded-r-lg border border-[#5a6a62] bg-[#ffd996] pl-[18px]">
        <NodeTriangle />
        <span className={`${MONO} ml-[5px] flex-1 text-[10px]`}>Placemark</span>
        <GearPlain />
        <svg width="12" height="12" viewBox="0 0 12 12" className="-mr-[10px]"><path d="M1 1v10l10-5z" fill="#e8df3c" stroke="#6d6500" /></svg>
      </div>
    </div>
    <div className="absolute left-[82px] top-[71px] z-10 flex h-[28px] w-[132px] items-center justify-between border border-[#c9c9c9] bg-[#f0f0f0] px-1">
      <button aria-label="Feature type"><FeatureTable /></button>
      <span className="h-[18px] w-px bg-[#cfcfcf]" />
      <button aria-label="Reader"><DrumArrow /></button>
      <button aria-label="Reader parameters"><DrumGear /></button>
      <span className="h-[18px] w-px bg-[#cfcfcf]" />
      <button aria-label="Open folder"><FolderDrum /></button>
      <button aria-label="Inspect"><InspectorIcon size={16} /></button>
    </div>
    <div className="absolute left-[385px] top-[98px] flex h-9 items-center">
      <svg width="12" height="12" viewBox="0 0 12 12" className="z-10 -mr-[3px]"><path d="M1 1v10l10-5z" fill="#c00c0c" stroke="#5a0a0a" /></svg>
      <div className="flex h-[25px] w-[123px] items-center rounded-l-lg border border-[#5a6a62] bg-[#ffd996] pl-[5px]">
        <NodeTriangle />
        <span className={`${MONO} ml-[2px] w-[83px] text-[10px]`}>Placemark</span>
        <GearPlain />
      </div>
      <div className="-ml-[8px]"><NodeCircle arrowAt="left" /></div>
    </div>
  </div>
);

const WorkbenchWindow = () => (
  <div className="absolute bottom-0 left-[39px] top-[48px] flex w-[988px] flex-col border-r border-t border-[#9a9a9a] bg-[#f0f0f0] shadow-[0_0_14px_rgba(0,0,0,0.6)]">
    <div className="flex h-7 shrink-0 items-center bg-white pl-[8px] pr-[18px] text-[13px] text-[#999]">
      <Mascot />
      <span className="ml-[5px] flex-1">*OGCKML → ESRISHAPE (Untitled) - FME Workbench 2018.0</span>
      <span className="flex items-center gap-[35px]">
        <button aria-label="Minimize"><Svg size={10} box={10}><path d="M0 5.500h10" stroke="#999" /></Svg></button>
        <button aria-label="Maximize"><Svg size={10} box={10}><path d="M.5.500h9v9h-9z" stroke="#999" /></Svg></button>
        <button aria-label="Close"><CloseIcon size={11} color="#999" width={0.9} /></button>
      </span>
    </div>
    <nav className="flex h-6 shrink-0 items-center gap-[14px] bg-white pl-[8px] pt-px">
      <Menu
        items={[
          ['', 'F', 'ile'], ['', 'E', 'dit'], ['', 'V', 'iew'], ['', 'R', 'eaders'], ['Tr', 'a', 'nsformers'],
          ['', 'W', 'riters'], ['Ru', 'n', ''], ['', 'T', 'ools'], ['', 'H', 'elp'],
        ]}
      />
    </nav>
    <div className="flex h-[34px] shrink-0 items-center border-b border-t border-b-[#b9b9b9] border-t-[#e3e3e3] pl-[4px]">
      <span className="mr-[5px] h-[26px] w-px border-l border-dashed border-[#aaa]" />
      <Tool label="New"><NewIcon /></Tool>
      <Tool label="Open"><FolderIcon /></Tool>
      <Tool label="Save"><SaveIcon /></Tool>
      <Sep />
      <Tool label="Run"><PlayIcon /></Tool>
      <Tool label="Stop"><StopIcon /></Tool>
      <Sep />
      <Tool label="Prompt" active><HelpIcon /></Tool>
      <Tool label="Run with inspection"><FindRunIcon /></Tool>
      <Sep />
      <Tool label="Cut"><CutIcon /></Tool>
      <Tool label="Copy"><CopyIcon /></Tool>
      <Tool label="Paste"><PasteIcon /></Tool>
      <Tool label="Undo"><UndoIcon /></Tool>
      <Tool label="Redo"><RedoIcon /></Tool>
      <Sep />
      <Tool label="Select" active><PointerIcon /></Tool>
      <Tool label="Pan"><HandIcon /></Tool>
      <Tool label="Zoom in"><ZoomIcon plus /></Tool>
      <Tool label="Zoom out"><ZoomIcon /></Tool>
      <Sep />
      <input aria-label="Zoom level" defaultValue="100%" className={`${MONO} ml-[5px] h-5 w-[30px] shrink-0 border border-[#7a7a7a] bg-white px-[2px] text-[10px]`} />
      <button aria-label="Less" className="ml-2">
        <Svg size={16} box={16}><circle cx="8" cy="8" r="7" fill="#f6f6f6" stroke="#aaa" /><path d="M4 8h8" stroke="#3b5364" strokeWidth="2" /></Svg>
      </button>
      <span className="ml-2 grid shrink-0 items-center">
        <input
          type="range"
          aria-label="Zoom"
          className="col-start-1 row-start-1 h-6 w-[77px] appearance-none bg-transparent opacity-0"
        />
        <svg width="77" height="26" viewBox="0 0 77 26" className="pointer-events-none col-start-1 row-start-1">
          <path d="M5.500 2v4M39 2v4M71.500 2v4" stroke="#a8a090" />
          <path d="M.5 14.500h76v3H.5z" fill="#e7eaea" stroke="#d6d6d6" />
          <path d="M33.500 11 39 6l5.500 5v14h-11z" fill="#0078d7" />
        </svg>
      </span>
      <button aria-label="More" className="ml-2 mr-[2px]">
        <Svg size={16} box={16}><circle cx="8" cy="8" r="7" fill="#f6f6f6" stroke="#aaa" /><path d="M4 8h8M8 4v8" stroke="#3b5364" strokeWidth="2" /></Svg>
      </button>
      <Tool label="Zoom to selection"><WindowArrows dashed /></Tool>
      <Sep />
      <Tool label="Zoom extents"><WindowArrows /></Tool>
      <Tool label="Full screen"><WindowArrows monitor /></Tool>
      <Sep />
      <Tool label="Add reader"><ReaderAdd /></Tool>
      <Tool label="Add writer"><WriterAdd /></Tool>
      <Tool label="Add transformer"><TransformerAdd /></Tool>
      <Tool label="Add bookmark"><BookmarkAdd /></Tool>
      <Sep />
      <Tool label="Inspector"><InspectorIcon /></Tool>
      <span className="ml-[3px] text-[14px] font-bold leading-none">»</span>
    </div>
    <div className="flex min-h-0 flex-1">
      <LeftDock />
      <main className="ml-[5px] flex min-w-0 flex-1 flex-col">
        <div className={`${MONO} flex h-[24px] shrink-0 items-end pl-[2px] text-[10px]`}>
          <button className="flex h-[22px] w-[70px] items-center justify-between border-l border-t border-[#d9d9d9] pl-[7px] pr-[9px]">
            Start<CloseIcon color="#a0a0a0" width={2} />
          </button>
          <button className="flex h-6 w-[71px] items-center justify-between border-x border-t border-[#d9d9d9] bg-white pl-[12px] pr-[10px]">
            Main<CloseIcon color="#a0a0a0" width={2} />
          </button>
        </div>
        <div className="mr-[2px] flex h-[315px] shrink-0 border border-[#d9d9d9] p-px">
          <div className="flex flex-1 flex-col border border-[#82879b]">
            <div className="flex min-h-0 flex-1">
              <Canvas />
              <VScroll thumb="flex-1" />
            </div>
            <div className="h-4 bg-[#f0f0f0]" />
          </div>
        </div>
        <div className="h-[6px] shrink-0" />
        <PanelHeader title="Translation Log" inset />
        <div className={`${MONO} mb-[3px] mt-[32px] flex-1 border border-[#82879b] bg-white pl-[4px] pt-[171px] text-[12px] leading-[15px]`}>
          <pre className={`${MONO} pl-[516px]`}>{` 20180209)
45_12084.fmw for output


`}</pre>
          <pre className={`${MONO} pr-[7px] text-right`}>process memory usage: 42448 kB</pre>
        </div>
      </main>
    </div>
  </div>
);

/* ---------- Feature Type dialog ---------- */

const FeatureTypeDialog = () => (
  <div
    role="dialog"
    aria-label="Feature Type"
    className="absolute bottom-0 left-[268px] top-[306px] flex w-[552px] flex-col overflow-hidden border-x border-t border-[#1883d7] bg-[#f0f0f0] shadow-[0_0_18px_rgba(0,0,0,0.45)]"
  >
    <div className="flex h-[30px] shrink-0 items-center bg-white pl-2 pr-[9px] text-[13px]">
      <Mascot />
      <span className="ml-[5px] flex-1">Feature Type</span>
      <button aria-label="Close"><CloseIcon size={11} width={0.9} /></button>
    </div>
    <div className={`${MONO} flex h-[35px] shrink-0 items-end pl-[13px] text-[10px]`}>
      <button className="flex h-[21px] w-[102px] items-center gap-1 border-l border-t border-[#d9d9d9] pl-[9px]"><GearGreen />Parameters</button>
      <button className="flex h-[21px] w-[133px] items-center gap-1 border-l border-t border-[#d9d9d9] pl-[11px]"><BrownArrow />User Attributes</button>
      <button className="flex h-[24px] w-[147px] items-center gap-1 border-x border-t border-[#d9d9d9] bg-white pl-[11px]"><BrownArrow />Format Attributes</button>
    </div>
    <div className="ml-[11px] mr-[13px] flex min-h-0 flex-1 flex-col border-x border-t border-[#d9d9d9] bg-white pl-[19px] pr-5 pt-[18px]">
      <div className="flex min-h-0 flex-1 border-x border-t border-[#82879b]">
        <div className="min-w-0 flex-1 overflow-hidden">
          <table className="w-full table-fixed border-separate border-spacing-0 text-[12px]">
            <colgroup>
              <col className="w-[70px]" />
              <col className="w-[299px]" />
              <col />
            </colgroup>
            <thead>
              <tr className="h-[25px] text-left">
                <th className="border-r border-[#e4e4e4] p-0 pl-1 font-normal">Exposed</th>
                <th className="relative border-r border-[#e4e4e4] p-0 pl-1 font-normal">
                  Name
                  <svg width="8" height="5" viewBox="0 0 8 5" className="absolute left-[145px] top-0" fill="none"><path d="M.5 4.500 4 1l3.500 3.500" stroke="#666" /></svg>
                </th>
                <th className="p-0 pl-1 font-normal">Type</th>
              </tr>
            </thead>
            <tbody>
              {exposedRows.map((row, i) => (
                <tr key={row.name} className={`h-5 ${i % 2 ? 'bg-[#e8e6e2]' : 'bg-white'}`}>
                  <td className="border-b border-r border-[#d6d6d6] p-0 text-center leading-[0]">
                    <Check label={row.name} checked={row.checked} />
                  </td>
                  <td className="border-b border-r border-[#d6d6d6] p-0 pl-[3px] leading-[19px]">
                    <span className="flex h-[19px] items-center gap-[5px]">
                      <svg width="8" height="9" viewBox="0 0 8 9"><path d="M1 1v7l6-3.500z" fill="#e6e6e6" stroke="#a8a8a8" /></svg>
                      {row.name}
                    </span>
                  </td>
                  <td className="border-b border-r border-[#d6d6d6] p-0 pl-1 leading-[19px]">{row.type}</td>
                </tr>
              ))}
            </tbody>
          </table>
        </div>
        <VScroll before="h-[182px]" thumb="h-[37px]" arrowDown={false} />
      </div>
    </div>
  </div>
);

/* ---------- red annotations ---------- */

const Annotations = () => (
  <div className="pointer-events-none absolute inset-0 z-20">
    <div className="absolute left-[284px] top-[646px] h-[58px] w-[498px] rounded border-3 border-[#ff2010]" />
    <div className="absolute left-[1029px] top-[330px] h-[137px] w-[543px] rounded border-3 border-[#ff2010]" />
    <svg width="220" height="214" viewBox="0 0 220 214" className="absolute left-[787px] top-[450px]">
      <path d="M1.500 211.500 201 9.500l-3-3.500 18-3-5 17-3-3L3 213z" fill="#ff2010" />
    </svg>
    <p className="absolute left-[901px] top-[592px] text-[21px] leading-[30px] text-[#ff2010]">名字对应</p>
  </div>
);

const ScreenMeter = () => (
  <div className="absolute right-0 top-[393px] z-20 flex h-[58px] w-[9px] flex-col justify-end rounded-l bg-[#4b4b4b] pb-[2px] pl-px">
    {Array(10).fill().map((_, i) => (
      <span key={i} className="mt-px h-[2px] bg-[#2ecc5c]" />
    ))}
  </div>
);

const App = () => (
  <div className={`${UI} relative h-screen overflow-hidden bg-white text-black`}>
    <InspectorWindow />
    <WorkbenchWindow />
    <div className="pointer-events-none absolute left-[344px] top-[204px] h-[99px] w-[247px] rounded border-3 border-[#ff2010]" />
    <FeatureTypeDialog />
    <Annotations />
    <ScreenMeter />
  </div>
);

export default App;
